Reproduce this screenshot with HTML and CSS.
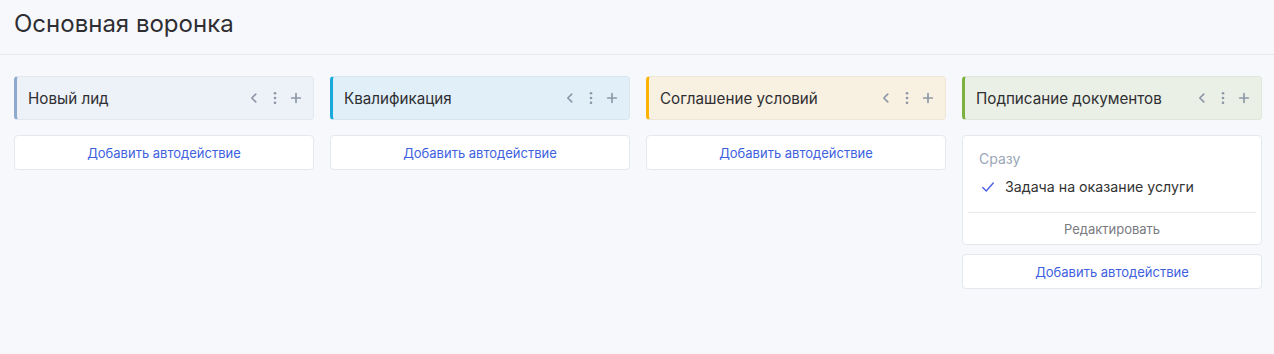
FILE: index.html
```html
<!DOCTYPE html>
<html lang="ru">
<head>
<meta charset="utf-8">
<link rel="stylesheet" href="styles.css">
</head>
<body>
<header class="page-header">
  <h1 class="page-title">Основная воронка</h1>
</header>
<main class="board">
  <section class="column">
    <div class="col-head col-lead">
      <span class="col-title">Новый лид</span>
      <div class="col-tools">
        <svg class="ic" viewBox="0 0 16 16"><path d="M10 3.5 5.5 8l4.5 4.5" fill="none" stroke="currentColor" stroke-width="1.9" stroke-linecap="round" stroke-linejoin="round"/></svg>
        <svg class="ic" viewBox="0 0 16 16"><circle cx="8" cy="2.5" r="1.5" fill="currentColor"/><circle cx="8" cy="8" r="1.5" fill="currentColor"/><circle cx="8" cy="13.5" r="1.5" fill="currentColor"/></svg>
        <svg class="ic" viewBox="0 0 16 16"><path d="M8 3v10M3 8h10" fill="none" stroke="currentColor" stroke-width="1.9" stroke-linecap="round"/></svg>
      </div>
    </div>
    <button class="add-btn">Добавить автодействие</button>
  </section>
  <section class="column">
    <div class="col-head col-qual">
      <span class="col-title">Квалификация</span>
      <div class="col-tools">
        <svg class="ic" viewBox="0 0 16 16"><path d="M10 3.5 5.5 8l4.5 4.5" fill="none" stroke="currentColor" stroke-width="1.9" stroke-linecap="round" stroke-linejoin="round"/></svg>
        <svg class="ic" viewBox="0 0 16 16"><circle cx="8" cy="2.5" r="1.5" fill="currentColor"/><circle cx="8" cy="8" r="1.5" fill="currentColor"/><circle cx="8" cy="13.5" r="1.5" fill="currentColor"/></svg>
        <svg class="ic" viewBox="0 0 16 16"><path d="M8 3v10M3 8h10" fill="none" stroke="currentColor" stroke-width="1.9" stroke-linecap="round"/></svg>
      </div>
    </div>
    <button class="add-btn">Добавить автодействие</button>
  </section>
  <section class="column">
    <div class="col-head col-terms">
      <span class="col-title">Соглашение условий</span>
      <div class="col-tools">
        <svg class="ic" viewBox="0 0 16 16"><path d="M10 3.5 5.5 8l4.5 4.5" fill="none" stroke="currentColor" stroke-width="1.9" stroke-linecap="round" stroke-linejoin="round"/></svg>
        <svg class="ic" viewBox="0 0 16 16"><circle cx="8" cy="2.5" r="1.5" fill="currentColor"/><circle cx="8" cy="8" r="1.5" fill="currentColor"/><circle cx="8" cy="13.5" r="1.5" fill="currentColor"/></svg>
        <svg class="ic" viewBox="0 0 16 16"><path d="M8 3v10M3 8h10" fill="none" stroke="currentColor" stroke-width="1.9" stroke-linecap="round"/></svg>
      </div>
    </div>
    <button class="add-btn">Добавить автодействие</button>
  </section>
  <section class="column">
    <div class="col-head col-docs">
      <span class="col-title">Подписание документов</span>
      <div class="col-tools">
        <svg class="ic" viewBox="0 0 16 16"><path d="M10 3.5 5.5 8l4.5 4.5" fill="none" stroke="currentColor" stroke-width="1.9" stroke-linecap="round" stroke-linejoin="round"/></svg>
        <svg class="ic" viewBox="0 0 16 16"><circle cx="8" cy="2.5" r="1.5" fill="currentColor"/><circle cx="8" cy="8" r="1.5" fill="currentColor"/><circle cx="8" cy="13.5" r="1.5" fill="currentColor"/></svg>
        <svg class="ic" viewBox="0 0 16 16"><path d="M8 3v10M3 8h10" fill="none" stroke="currentColor" stroke-width="1.9" stroke-linecap="round"/></svg>
      </div>
    </div>
    <div class="auto-card">
      <div class="auto-when">Сразу</div>
      <div class="auto-item">
        <svg class="check" viewBox="0 0 16 16"><path d="M2 8.5 6 12.5 14 3.5" fill="none" stroke="currentColor" stroke-width="1.6" stroke-linecap="round" stroke-linejoin="round"/></svg>
        <span>Задача на оказание услуги</span>
      </div>
      <div class="auto-edit">Редактировать</div>
    </div>
    <button class="add-btn add-after">Добавить автодействие</button>
  </section>
</main>
</body>
</html>
```

FILE: styles.css
```css
* { box-sizing: border-box; }
html, body { margin: 0; padding: 0; }
body {
  background: #f7f8fc;
  font-family: Inter, "Noto Sans", sans-serif;
  color: #333;
  width: 1274px;
  height: 354px;
}
.page-header {
  height: 55px;
  padding: 0 14px;
  border-bottom: 1px solid #e6e8ee;
  display: flex;
  align-items: center;
}
.page-title {
  margin: 0 0 8px;
  font-size: 24px;
  font-weight: 400;
  color: #2e2e33;
}
.board {
  display: flex;
  gap: 16px;
  padding: 21px 0 21px 14px;
}
.column {
  width: 300px;
  flex: 0 0 300px;
  display: flex;
  flex-direction: column;
}
.col-head {
  height: 44px;
  border-radius: 4px;
  border: 1px solid rgba(0,0,0,0.04);
  border-left: 3px solid;
  display: flex;
  align-items: center;
  padding: 0 10px 0 11px;
}
.col-lead { background: #edf1f8; border-left-color: #8eaad0; }
.col-qual { background: #e1f0f8; border-left-color: #1aa9dc; }
.col-terms { background: #f8f0e0; border-left-color: #fcb400; }
.col-docs { background: #ebf0e6; border-left-color: #7bb13c; }
.col-title {
  flex: 1;
  font-size: 15.2px;
  color: #2f2f33;
}
.col-tools {
  display: flex;
  gap: 7px;
  color: #8d97a8;
}
.ic { width: 14px; height: 14px; display: block; }
.add-btn {
  margin-top: 15px;
  height: 35px;
  background: #fff;
  border: 1px solid #e4e7ed;
  border-radius: 4px;
  font-family: inherit;
  font-size: 13px;
  color: #3e5fe0;
  cursor: pointer;
}
.add-after { margin-top: 9px; }
.auto-card {
  margin-top: 15px;
  background: #fff;
  border: 1px solid #e4e7ed;
  border-radius: 4px;
  padding: 0 5px;
}
.auto-when {
  padding: 14px 11px 0;
  font-size: 14px;
  color: #9aa5b8;
  height: 36px;
}
.auto-item {
  display: flex;
  gap: 10px;
  padding: 6px 12px 0 13px;
  height: 40px;
  align-items: flex-start;
  font-size: 14.2px;
  color: #333;
}
.auto-item span { line-height: 17px; }
.check { width: 14px; height: 14px; color: #4a5ee6; margin-top: 2px; }
.auto-edit {
  border-top: 1px solid #e8eaef;
  height: 32px;
  display: flex;
  align-items: center;
  justify-content: center;
  font-size: 13px;
  color: #7a7a80;
}
```
